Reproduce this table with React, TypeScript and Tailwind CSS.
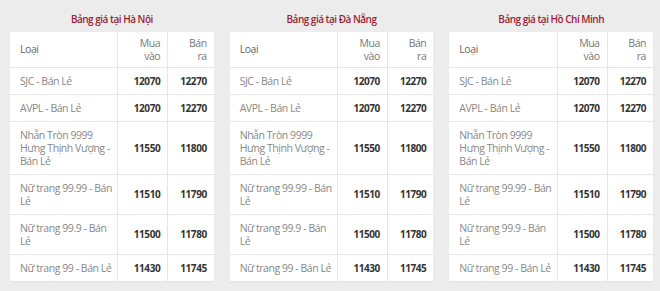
import React from "react";

type Row = { name: string; buy: string; sell: string };

const rows: Row[] = [
  { name: "SJC - Bán Lẻ", buy: "12070", sell: "12270" },
  { name: "AVPL - Bán Lẻ", buy: "12070", sell: "12270" },
  { name: "Nhẫn Tròn 9999 Hưng Thịnh Vượng - Bán Lẻ", buy: "11550", sell: "11800" },
  { name: "Nữ trang 99.99 - Bán Lẻ", buy: "11510", sell: "11790" },
  { name: "Nữ trang 99.9 - Bán Lẻ", buy: "11500", sell: "11780" },
  { name: "Nữ trang 99 - Bán Lẻ", buy: "11430", sell: "11745" },
];

const cities = ["Hà Nội", "Đà Nẵng", "Hồ Chí Minh"];

function PriceTable({ city }: { city: string }) {
  return (
    <div className="flex-1 min-w-0">
      <div className="pt-[12px] pb-[6px] text-center text-[10px] leading-[14px] font-semibold tracking-[-0.5px] text-[#9e1c36]">
        Bảng giá tại {city}
      </div>
      <table className="w-full table-fixed border-collapse bg-white text-[10.5px] leading-[13px] tracking-[-0.45px] shadow-[0_1px_1px_rgba(0,0,0,0.04)]">
        <colgroup>
          <col />
          <col className="w-[50px]" />
          <col className="w-[46px]" />
        </colgroup>
        <thead>
          <tr className="border-b border-[#e6e6e6]">
            <th className="pl-[10px] pr-[7px] py-[4.5px] text-left font-normal text-[#666]">Loại</th>
            <th className="pl-[6px] pr-[7px] py-[4.5px] text-right font-normal text-[#777] border-l border-[#e6e6e6]">
              Mua
              <br />
              vào
            </th>
            <th className="pl-[6px] pr-[7px] py-[4.5px] text-right font-normal text-[#777] border-l border-[#e6e6e6]">
              Bán
              <br />
              ra
            </th>
          </tr>
        </thead>
        <tbody>
          {rows.map((r) => (
            <tr key={r.name} className="border-b border-[#e6e6e6] last:border-b-0">
              <td className="pl-[10px] pr-[5px] py-[6.5px] text-[#888]">{r.name}</td>
              <td className="pl-[4px] pr-[7px] py-[6.5px] text-right text-[10px] font-bold text-[#333] border-l border-[#e6e6e6]">
                {r.buy}
              </td>
              <td className="pl-[4px] pr-[7px] py-[6.5px] text-right text-[10px] font-bold text-[#333] border-l border-[#e6e6e6]">
                {r.sell}
              </td>
            </tr>
          ))}
        </tbody>
      </table>
    </div>
  );
}

export default function App() {
  return (
    <div
      className="w-[660px] h-[291px] bg-[#ececec] flex gap-[16px] pl-[10px] pr-[7px]"
      style={{ fontFamily: '"Open Sans", "Noto Sans", sans-serif' }}
    >
      {cities.map((c) => (
        <PriceTable key={c} city={c} />
      ))}
    </div>
  );
}
